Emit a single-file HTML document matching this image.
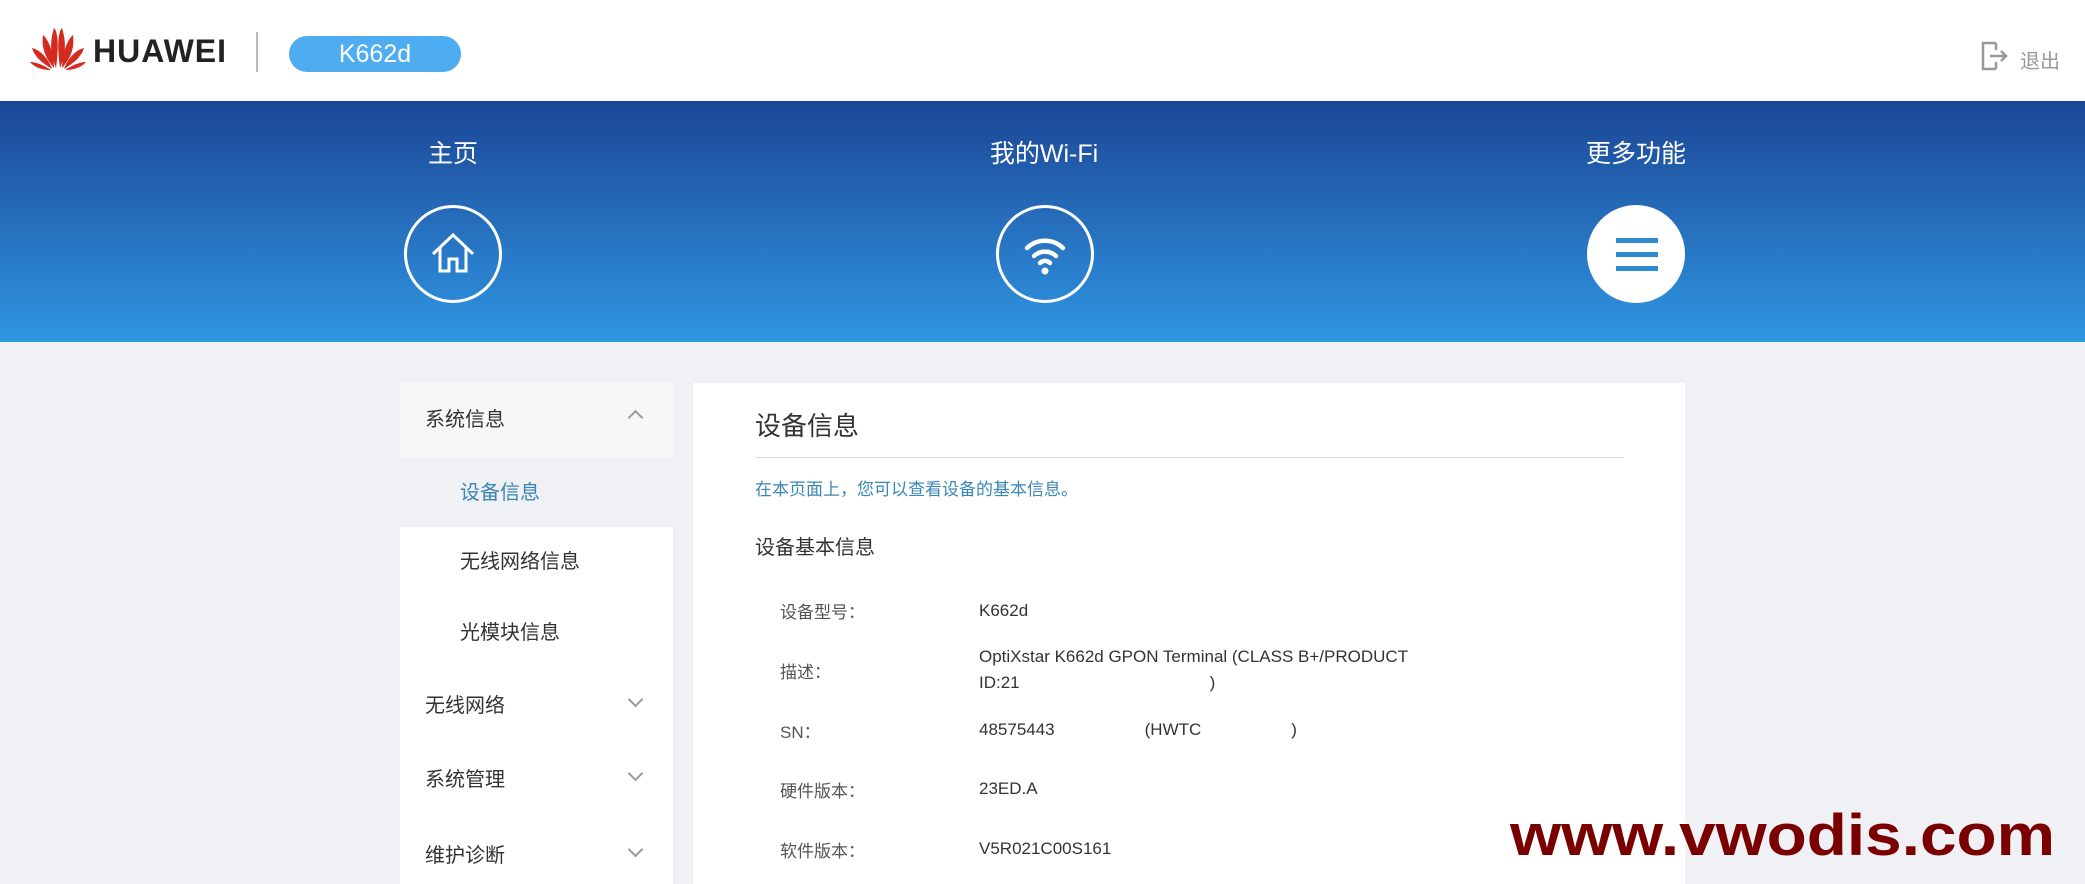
<!DOCTYPE html>
<html><head><meta charset="utf-8"><style>
*{margin:0;padding:0;box-sizing:border-box}
body{width:2085px;height:884px;overflow:hidden;background:#eff1f5;font-family:"Liberation Sans","Noto Sans CJK SC",sans-serif;position:relative}
.a{position:absolute;white-space:nowrap}
#hdr{position:absolute;left:0;top:0;width:2085px;height:101px;background:#fff}
#ban{position:absolute;left:0;top:101px;width:2085px;height:241px;background:linear-gradient(#1c4696,#2f96e1)}
.nav{position:absolute;color:#fff;font-size:25px;transform:translateX(-50%);top:134px}
.circ{position:absolute;width:98px;height:98px;border:3px solid #fff;border-radius:50%;top:205px}
#side{position:absolute;left:400px;top:383px;width:273px;height:501px;background:#fff}
.si{position:absolute;font-size:20px;color:#333}
.chev{position:absolute;left:630px;width:11px;height:11px;border-right:2px solid #999;border-bottom:2px solid #999}
#main{position:absolute;left:693px;top:383px;width:992px;height:501px;background:#fff}
.lb{position:absolute;left:780px;font-size:17px;color:#555}
.vl{position:absolute;left:979px;font-size:17px;color:#333}
</style></head><body>
<div id="hdr"></div>
<svg class="a" style="left:29px;top:26px" width="58" height="44" viewBox="0 0 58 44">
<g fill="#d42a1f">
<path d="M27 42 C22 30 20 18 25 2 C29 6 30 20 27 42Z"/>
<path d="M31 42 C36 30 38 18 33 2 C29 6 28 20 31 42Z"/>
<path d="M25 42 C18 34 12 24 14 9 C20 14 25 28 25 42Z"/>
<path d="M33 42 C40 34 46 24 44 9 C38 14 33 28 33 42Z"/>
<path d="M23 43 C15 38 6 32 3 22 C12 24 20 34 23 43Z"/>
<path d="M35 43 C43 38 52 32 55 22 C46 24 38 34 35 43Z"/>
<path d="M22 44 C14 44 6 42 1 36 C8 36 16 40 22 44Z"/>
<path d="M36 44 C44 44 52 42 57 36 C50 36 42 40 36 44Z"/>
</g></svg>
<div class="a" style="left:93px;top:33px;font-size:32px;font-weight:bold;color:#222;letter-spacing:1px">HUAWEI</div>
<div class="a" style="left:256px;top:32px;width:2px;height:40px;background:#bbb"></div>
<div class="a" style="left:289px;top:36px;width:172px;height:36px;border-radius:18px;background:#4eacf0;color:#fff;font-size:25px;text-align:center;line-height:36px">K662d</div>
<svg class="a" style="left:1980px;top:40px" width="30" height="32" viewBox="0 0 30 32"><path d="M16 3H3V29H16M16 22V29M16 3V10" fill="none" stroke="#999" stroke-width="2.5"/><path d="M10 16H26M21 11L26 16L21 21" fill="none" stroke="#999" stroke-width="2.5"/></svg>
<div class="a" style="left:2020px;top:45px;font-size:20px;color:#999">退出</div>

<div id="ban"></div>
<div class="nav" style="left:453px">主页</div>
<div class="nav" style="left:1044px">我的Wi-Fi</div>
<div class="nav" style="left:1636px">更多功能</div>
<div class="circ" style="left:404px"></div>
<svg class="a" style="left:425px;top:226px" width="56" height="56" viewBox="0 0 56 56"><path d="M8 28L28 9L48 28M15 22V45H24V33H32V45H41V22" fill="none" stroke="#fff" stroke-width="3"/></svg>
<div class="circ" style="left:996px"></div>
<svg class="a" style="left:1015px;top:224px" width="60" height="60" viewBox="0 0 60 60"><g fill="none" stroke="#fff" stroke-width="4.5" stroke-linecap="round"><path d="M12 24A26 26 0 0 1 48 24"/><path d="M19 32A16 16 0 0 1 41 32"/><path d="M25 39A7 7 0 0 1 35 39"/></g><circle cx="30" cy="47" r="3.5" fill="#fff"/></svg>
<div class="a" style="left:1587px;top:205px;width:98px;height:98px;border-radius:50%;background:#fff"></div>
<div class="a" style="left:1616px;top:238px;width:42px;height:5px;background:#2e8bd0"></div>
<div class="a" style="left:1616px;top:252px;width:42px;height:5px;background:#2e8bd0"></div>
<div class="a" style="left:1616px;top:266px;width:42px;height:5px;background:#2e8bd0"></div>

<div id="side"></div>
<div class="a" style="left:400px;top:383px;width:273px;height:74px;background:#f6f7f9"></div>
<div class="a" style="left:400px;top:457px;width:273px;height:70px;background:#eff1f5"></div>
<div class="si" style="left:425px;top:403px">系统信息</div>
<div class="chev" style="top:412px;transform:rotate(-135deg)"></div>
<div class="si" style="left:460px;top:476px;color:#3a86b4">设备信息</div>
<div class="si" style="left:460px;top:545px">无线网络信息</div>
<div class="si" style="left:460px;top:616px">光模块信息</div>
<div class="si" style="left:425px;top:689px">无线网络</div>
<div class="chev" style="top:694px;transform:rotate(45deg)"></div>
<div class="si" style="left:425px;top:763px">系统管理</div>
<div class="chev" style="top:768px;transform:rotate(45deg)"></div>
<div class="si" style="left:425px;top:839px">维护诊断</div>
<div class="chev" style="top:844px;transform:rotate(45deg)"></div>

<div id="main"></div>
<div class="a" style="left:755px;top:406px;font-size:26px;color:#333">设备信息</div>
<div class="a" style="left:755px;top:457px;width:869px;height:1px;background:#ddd"></div>
<div class="a" style="left:755px;top:475px;font-size:17px;color:#3a86b4">在本页面上，您可以查看设备的基本信息。</div>
<div class="a" style="left:755px;top:531px;font-size:20px;color:#333">设备基本信息</div>
<div class="lb" style="top:598px">设备型号：</div><div class="vl" style="top:601px">K662d</div>
<div class="lb" style="top:658px">描述：</div>
<div class="vl" style="top:647px">OptiXstar K662d GPON Terminal (CLASS B+/PRODUCT</div>
<div class="vl" style="top:673px">ID:21<span style="margin-left:190px">)</span></div>
<div class="lb" style="top:718px">SN：</div><div class="vl" style="top:720px">48575443<span style="margin-left:90px">(HWTC</span><span style="margin-left:90px">)</span></div>
<div class="lb" style="top:777px">硬件版本：</div><div class="vl" style="top:779px">23ED.A</div>
<div class="lb" style="top:837px">软件版本：</div><div class="vl" style="top:839px">V5R021C00S161</div>

<svg class="a" style="left:1505px;top:800px" width="560" height="70"><text x="5" y="55" textLength="545" lengthAdjust="spacingAndGlyphs" font-family="Liberation Sans,sans-serif" font-weight="bold" font-size="58" fill="#7a0000">www.vwodis.com</text></svg>
</body></html>
